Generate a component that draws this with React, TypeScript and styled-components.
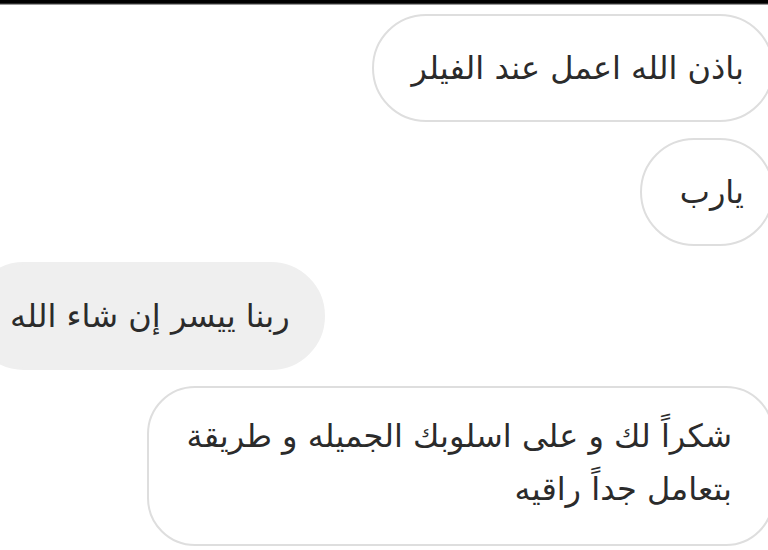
import React from 'react';
import styled, { createGlobalStyle } from 'styled-components';

const GlobalStyle = createGlobalStyle`
  html, body {
    margin: 0;
    padding: 0;
    background: #ffffff;
    overflow: hidden;
  }
  body {
    font-family: "DejaVu Sans", "Noto Sans", sans-serif;
  }
`;

const Screen = styled.div`
  width: 768px;
  height: 550px;
  overflow: hidden;
  background: #fff;
  display: flex;
  flex-direction: column;
`;

const TopBar = styled.div`
  height: 5px;
  background: linear-gradient(#000 0 3px, #555 4px, #ddd 5px);
  flex-shrink: 0;
`;

const Thread = styled.div`
  display: flex;
  flex-direction: column;
  gap: 16px;
  padding-top: 9px;
`;

const Row = styled.div<{ $side: 'in' | 'out' }>`
  display: flex;
  justify-content: ${p => (p.$side === 'out' ? 'flex-end' : 'flex-start')};
  margin-right: ${p => (p.$side === 'out' ? '-6px' : '0')};
  margin-left: ${p => (p.$side === 'in' ? '-30px' : '0')};
`;

const Bubble = styled.div<{ $side: 'in' | 'out'; $multi?: boolean }>`
  direction: rtl;
  box-sizing: border-box;
  color: #2b2b2b;
  font-size: 32px;
  line-height: 53px;
  min-height: 108px;
  display: flex;
  flex-direction: column;
  justify-content: center;
  align-items: flex-start;
  white-space: nowrap;
  padding: ${p =>
    p.$multi ? '22px 40px 28px 38px' : p.$side === 'in' ? '0 33px 0 38px' : '0 28px 0 38px'};
  border-radius: ${p => (p.$multi ? '48px' : '54px')};
  background: ${p => (p.$side === 'in' ? '#efefef' : '#ffffff')};
  border: 2px solid ${p => (p.$side === 'in' ? '#efefef' : '#dedede')};
`;

const Line = styled.span`
  display: block;
`;

const messages: { side: 'in' | 'out'; lines: string[] }[] = [
  { side: 'out', lines: ['باذن الله اعمل عند الفيلر'] },
  { side: 'out', lines: ['يارب'] },
  { side: 'in', lines: ['ربنا ييسر إن شاء الله'] },
  { side: 'out', lines: ['شكراً لك و على اسلوبك الجميله و طريقة', 'بتعامل جداً راقيه'] },
];

export default function App() {
  return (
    <>
      <GlobalStyle />
      <Screen>
        <TopBar />
        <Thread>
          {messages.map((m, i) => (
            <Row key={i} $side={m.side}>
              <Bubble $side={m.side} $multi={m.lines.length > 1}>
                {m.lines.map((l, j) => (
                  <Line key={j}>{l}</Line>
                ))}
              </Bubble>
            </Row>
          ))}
        </Thread>
      </Screen>
    </>
  );
}
